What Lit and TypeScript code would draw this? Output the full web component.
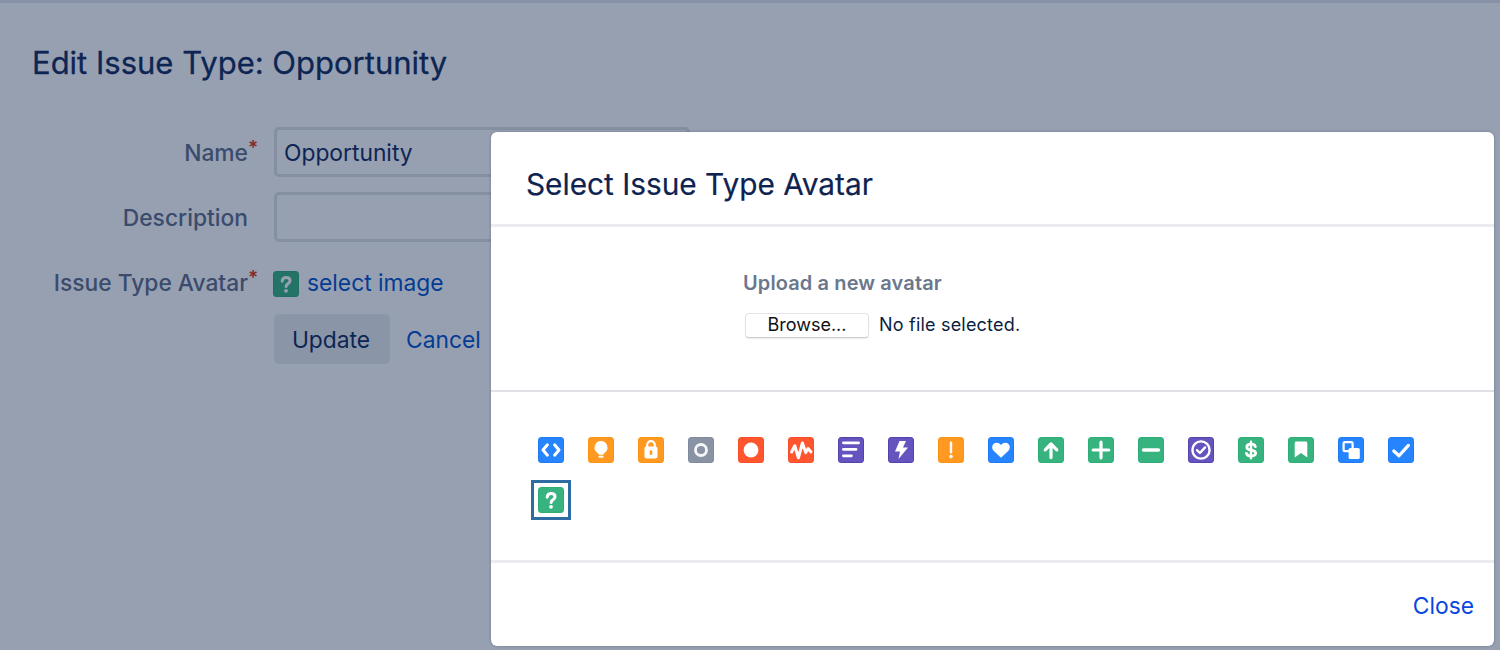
import { LitElement, html, css, svg } from "lit";
import { customElement } from "lit/decorators.js";

const BLUE = "#2684ff", ORANGE = "#ff991f", GRAY = "#8993a4", RED = "#ff5630", PURPLE = "#6554c0", GREEN = "#36b37e";
const EDGE: Record<string, string> = {
  [BLUE]: "#1f7bf2", [ORANGE]: "#fb9414", [GRAY]: "#818ba0", [RED]: "#f94f28", [PURPLE]: "#5243aa", [GREEN]: "#2cae76",
};
const s = (d: string, w = 3) =>
  svg`<path d=${d} fill="none" stroke="#fff" stroke-width=${w} stroke-linecap="round" stroke-linejoin="round"/>`;

const question = svg`${s("M9.2 10.2c.2-2.3 1.8-3.6 4-3.6 2.3 0 3.8 1.3 3.8 3.1 0 1.6-.9 2.4-2.2 3.2-1.1.7-1.7 1.2-1.7 2.6", 3)}<circle cx="13" cy="19.8" r="1.9" fill="#fff"/>`;

const ICONS: [string, unknown][] = [
  [BLUE, s("M9.4 7.8 5 13l4.4 5.2M16.6 7.8 21 13l-4.4 5.2", 3)],
  [ORANGE, svg`<path d="M13 4a6.5 6.5 0 0 0-3.4 12c.6.5.9 1 1 1.8h4.8c.1-.8.4-1.3 1-1.8A6.5 6.5 0 0 0 13 4z" fill="#fff"/><rect x="10.4" y="18.8" width="5.2" height="2" rx="1" fill="#fff"/>`],
  [ORANGE, svg`<path d="M9.2 10V8a3.8 3.8 0 0 1 7.6 0v2" fill="none" stroke="#fff" stroke-width="2.2"/><rect x="6.5" y="9.4" width="13" height="12" rx="1.8" fill="#fff"/><rect x="11.7" y="13.2" width="2.6" height="4.8" rx="1.3" fill="${ORANGE}"/>`],
  [GRAY, svg`<circle cx="13" cy="13" r="5.5" fill="none" stroke="#fff" stroke-width="2.8" opacity=".92"/>`],
  [RED, svg`<circle cx="13" cy="13" r="7.4" fill="#fff"/>`],
  [RED, s("M3.6 15 6.8 8.8l3.6 12L14.4 6l3.4 9.6 2.2-4 3 3.4", 3)],
  [PURPLE, svg`${s("M5.4 5.8h15.2M5.4 12.4h12.6M5.4 18.8h8", 2.8)}`],
  [PURPLE, svg`<path d="M11.5 4H18l-3 6.5h5L10.5 22l1.5-7.5H7z" fill="#fff"/>`],
  [ORANGE, svg`<rect x="11.8" y="4.4" width="2.4" height="12" rx="1.2" fill="#fff"/><circle cx="13" cy="19.6" r="1.8" fill="#fff"/>`],
  [BLUE, svg`<path d="M13 20.8 5.6 13.8c-1.9-1.9-1.9-5-.1-6.8 1.9-1.8 5.2-1.6 7.5.9 2.3-2.5 5.6-2.7 7.5-.9 1.8 1.8 1.8 4.9-.1 6.8z" fill="#fff"/>`],
  [GREEN, s("M13 20.6V7.4M7.2 12.8 13 7l5.8 5.8", 3.2)],
  [GREEN, s("M13 5.2v15.6M5.2 13h15.6", 3.2)],
  [GREEN, s("M5.6 13h14.8", 3.6)],
  [PURPLE, svg`<circle cx="13" cy="13" r="8.6" fill="none" stroke="#fff" stroke-width="2.4"/>${s("M9 13.2l2.9 2.8 5.2-5.6", 2.4)}`],
  [GREEN, svg`${s("M17.4 9.6c-.5-1.4-2-2.4-4.4-2.4-2.4 0-4.2 1.2-4.2 3 0 4.2 8.8 1.8 8.8 5.8 0 1.8-1.8 3-4.6 3-2.4 0-4.2-1-4.6-2.6", 2.8)}${s("M13 4.8v16.4", 2.4)}`],
  [GREEN, svg`<path d="M6.7 6.2c0-.9.7-1.6 1.6-1.6h9.4c.9 0 1.6.7 1.6 1.6v14.2L13 15.9l-6.3 4.5z" fill="#fff"/>`],
  [BLUE, svg`<rect x="5.6" y="5.2" width="9" height="9" rx="1.4" fill="none" stroke="#fff" stroke-width="2.2"/><rect x="10.6" y="11" width="11.2" height="11" rx="1.6" fill="#fff"/>`],
  [BLUE, s("M5.8 14l5.2 4.8 9.4-10.4", 3.2)],
  [GREEN, question],
];

const tile = (color: string, body: unknown) => html`<svg class="tile" viewBox="0 0 26 26" width="26" height="26" aria-hidden="true">
  <rect x=".5" y=".5" width="25" height="25" rx="2.6" fill=${color} stroke=${EDGE[color]} stroke-width="1"/>${body}</svg>`;

@customElement("app-root")
export class AppRoot extends LitElement {
  static styles = css`
    :host { display: block; width: 1500px; height: 650px; position: relative; overflow: hidden; background: #fff;
      font-family: Inter, "Noto Sans", "Liberation Sans", sans-serif; color: #0f2a5c; }
    .page { padding: 42px 0 0 32px; border-top: 3px solid #e5e7ec; box-sizing: border-box; height: 650px; }
    h1 { margin: 0; font-size: 31px; line-height: 36px; font-weight: 400; -webkit-text-stroke: 0.3px #0f2a5c; }
    form { margin: 46px 0 0 -32px; display: grid; grid-template-columns: 248px 416px; column-gap: 26px; align-items: start; }
    .label { text-align: right; font-size: 22.8px; line-height: 28px; font-weight: 500; color: #5f6c88; padding-top: 12px; white-space: nowrap; }
    .label.req { position: relative; }
    .req::after { content: "*"; color: #de350b; position: absolute; left: 100%; top: 7px; font-size: 19px; font-weight: 600; }
    .input { height: 50px; box-sizing: border-box; border: 3px solid #dfe1e6; border-radius: 5px; font-size: 22.8px; line-height: 46px; padding-left: 7px; margin-bottom: 15px; }
    .avatar { display: flex; align-items: center; gap: 8px; height: 28px; margin: 11px 0 0 -1px; font-size: 22.8px; }
    .avatar .tile { margin-top: 4px; }
    a { color: #0052cc; text-decoration: none; }
    .actions { grid-column: 2; display: flex; align-items: center; gap: 16px; margin-top: 17px; font-size: 22.8px; }
    .update { height: 50px; width: 116px; border-radius: 5px; background: #ebecf0; display: flex; align-items: center; justify-content: center; padding-right: 2px; box-sizing: border-box; }
    .scrim { position: absolute; inset: 0; background: rgba(9, 30, 70, 0.425); }
    .dialog { position: absolute; left: 491px; top: 132px; width: 1003px; height: 514px; background: #fff; border-radius: 6px;
      box-shadow: 0 0 3px rgba(9,30,66,.3); display: flex; flex-direction: column; overflow: hidden; }
    .head { box-sizing: border-box; padding: 33px 35px 0; border-bottom: 3px solid #ebecf0; flex: none; height: 95px; }
    h2 { margin: 0; font-size: 29.8px; line-height: 39px; font-weight: 400; color: #0f2350; -webkit-text-stroke: 0.2px #0f2350; }
    .upload { height: 165px; box-sizing: border-box; border-bottom: 2px solid #dfe1e6; padding: 43px 0 0 252px; flex: none; }
    .upload h3 { margin: 0; font-size: 20px; line-height: 26px; font-weight: 600; letter-spacing: .11px; color: #6b778c; }
    .file { display: flex; align-items: center; gap: 11px; margin-top: 17px; font-size: 18px; letter-spacing: .2px; padding-left: 2px; color: #091e42; }
    .file span:last-child { margin-top: -2px; margin-left: -1px; }
    .browse { width: 124px; height: 25px; box-sizing: border-box; background: #fff; border: 1px solid #e3e3e6; border-bottom-color: #cfcfd4; border-radius: 4px; text-align: center; line-height: 21px; color: #111; font-size: 18px; letter-spacing: 0; box-shadow: 0 1px 1px rgba(0,0,0,.08); }
    .grid { height: 171px; box-sizing: border-box; border-bottom: 3px solid #ebecf0; padding: 45px 20px 0 47px; display: flex; flex-wrap: wrap; align-content: flex-start; row-gap: 24px; column-gap: 0; flex: none; }
    .cell { width: 50px; height: 26px; }
    .cell.sel { position: relative; }
    .cell.sel::before { content: ""; position: absolute; left: -7px; top: -7px; width: 40px; height: 40px; box-sizing: border-box; border: 3px solid #2e6da4; }
    .tile { display: block; position: relative; }
    .foot { flex: 1; display: flex; justify-content: flex-end; align-items: center; padding: 2px 20px 0 0; font-size: 22.8px; }
    .foot a { color: #0747e0; }
  `;

  render() {
    return html`
      <div class="page">
        <h1>Edit Issue Type: Opportunity</h1>
        <form>
          <div class="label req">Name</div>
          <div class="input">Opportunity</div>
          <div class="label">Description</div>
          <div class="input"></div>
          <div class="label req">Issue Type Avatar</div>
          <div class="avatar">${tile(GREEN, question)}<a href="#">select image</a></div>
          <div class="actions"><span class="update">Update</span><a href="#">Cancel</a></div>
        </form>
      </div>
      <div class="scrim"></div>
      <section class="dialog">
        <header class="head"><h2>Select Issue Type Avatar</h2></header>
        <div class="upload">
          <h3>Upload a new avatar</h3>
          <div class="file"><span class="browse">Browse...</span><span>No file selected.</span></div>
        </div>
        <div class="grid">
          ${ICONS.map(([c, b], i) => html`<div class="cell ${i === ICONS.length - 1 ? "sel" : ""}">${tile(c, b)}</div>`)}
        </div>
        <footer class="foot"><a href="#">Close</a></footer>
      </section>
    `;
  }
}
